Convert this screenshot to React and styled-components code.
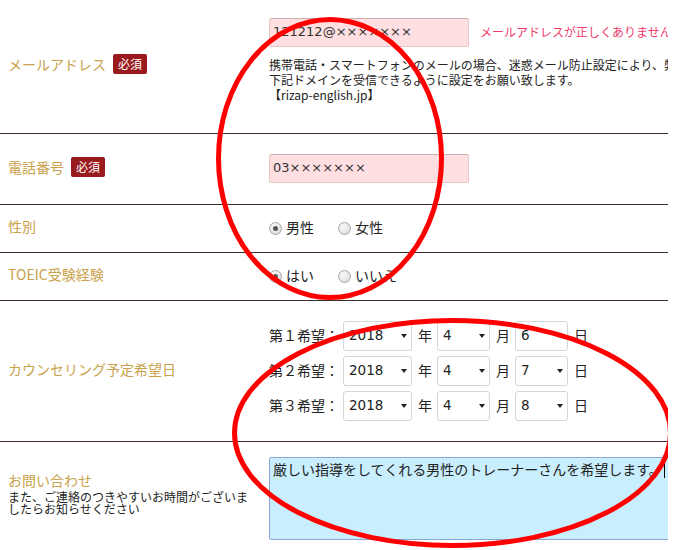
import React from 'react';
import styled, { createGlobalStyle } from 'styled-components';

const GlobalStyle = createGlobalStyle`
    html, body {
        margin: 0;
        padding: 0;
        background: #ffffff;
    }
`;

const Page = styled.div`
    position: relative;
    width: 668px;
    height: 550px;
    overflow: hidden;
    font-family: "Noto Sans CJK JP", "DejaVu Sans", sans-serif;
    color: #222222;
`;

const Row = styled.div`
    display: flex;
    border-bottom: 1px solid #3d2c26;
`;

const Label = styled.div`
    width: 269px;
    flex-shrink: 0;
    box-sizing: border-box;
    padding-left: 8px;
    padding-top: ${p => p.$top || '0'};
    padding-bottom: ${p => (p.$top ? '0' : '5px')};
    display: flex;
    flex-direction: column;
    justify-content: ${p => (p.$top ? 'flex-start' : 'center')};
`;

const LabelText = styled.div`
    display: flex;
    align-items: center;
    gap: 7px;
    font-size: 14px;
    line-height: 20px;
    color: #c9a24b;
`;

const Badge = styled.span`
    display: inline-block;
    background: #991b1e;
    color: #ffffff;
    font-size: 12px;
    line-height: 20px;
    padding: 0 5px;
    border-radius: 2px;
`;

const LabelNote = styled.div`
    margin-top: 1px;
    font-size: 12px;
    line-height: 12px;
    color: #222222;
`;

const Value = styled.div`
    flex: 1;
    min-width: 0;
    padding: ${p => p.$pad};
`;

const InputLine = styled.div`
    display: flex;
    align-items: center;
    white-space: nowrap;
`;

const TextBox = styled.div`
    width: 200px;
    height: 29px;
    box-sizing: border-box;
    flex-shrink: 0;
    background: #ffdfe1;
    border: 1px solid #e6c8c8;
    border-top-color: #cfb0b0;
    border-radius: 2px;
    padding: 0 3px;
    font-family: "DejaVu Sans", "Noto Sans CJK JP", sans-serif;
    font-size: 13px;
    line-height: 26px;
    color: #333333;
`;

const ErrorText = styled.span`
    margin-left: 11px;
    margin-top: -2px;
    font-size: 12px;
    color: #ee3a6a;
`;

const Note = styled.div`
    margin-top: 10px;
    font-size: 12px;
    line-height: 15px;
    white-space: nowrap;
`;

const RadioGroup = styled.div`
    display: flex;
    align-items: center;
    gap: 24px;
    height: 17px;
`;

const RadioItem = styled.label`
    display: flex;
    align-items: center;
    gap: 4px;
    font-size: 14px;
    line-height: 17px;
`;

const RadioDot = styled.span`
    width: 13px;
    height: 13px;
    box-sizing: border-box;
    border-radius: 50%;
    border: 1px solid #a8a8a8;
    background: radial-gradient(circle at 40% 35%, #fafafa 0%, #dcdcdc 80%);
    display: flex;
    align-items: center;
    justify-content: center;
    margin-top: 1px;

    &::after {
        content: '';
        width: 5px;
        height: 5px;
        border-radius: 50%;
        background: ${p => (p.$checked ? '#555555' : 'transparent')};
    }
`;

const DateList = styled.div`
    display: flex;
    flex-direction: column;
    gap: 5px;
`;

const DateRow = styled.div`
    display: flex;
    align-items: center;
    font-size: 14px;
    line-height: 20px;
`;

const Unit = styled.span`
    margin: 0 ${p => p.$right || '5px'} 0 ${p => p.$left || '6px'};
    padding-bottom: 3px;
`;

const SelectBox = styled.div`
    width: ${p => p.$w}px;
    height: 30px;
    box-sizing: border-box;
    border: 1px solid #d6d6d6;
    border-radius: 3px;
    background: #ffffff;
    display: flex;
    align-items: center;
    justify-content: space-between;
    padding: 0 4px 2px 5px;
    font-family: "DejaVu Sans", "Noto Sans CJK JP", sans-serif;
    font-size: 13.5px;
    color: #222222;
`;

const Arrow = styled.span`
    width: 0;
    height: 0;
    margin-top: 2px;
    border-left: 3px solid transparent;
    border-right: 3px solid transparent;
    border-top: 4px solid #222222;
`;

const TextArea = styled.div`
    width: 402px;
    height: 83px;
    box-sizing: border-box;
    background: #c9eefd;
    border: 1px solid #8ca6d8;
    border-radius: 2px;
    padding: 1px 3px;
    font-size: 14px;
    line-height: 20px;
    color: #222222;
    white-space: nowrap;
`;

const Caret = styled.span`
    display: inline-block;
    width: 1px;
    height: 18px;
    background: #000000;
    vertical-align: -3px;
    margin-left: 1px;
`;

const Marks = styled.svg`
    position: absolute;
    left: 0;
    top: 0;
    width: 675px;
    height: 550px;
    pointer-events: none;
`;

const Select = ({ w, value }) => (
    <SelectBox $w={w}>
        <span>{value}</span>
        <Arrow />
    </SelectBox>
);

const Radio = ({ checked, children }) => (
    <RadioItem>
        <RadioDot $checked={checked} />
        {children}
    </RadioItem>
);

const dates = [
    { n: '１', d: '6' },
    { n: '２', d: '7' },
    { n: '３', d: '8' },
];

const App = () => {
    return (
        <Page>
            <GlobalStyle />
            <Row>
                <Label>
                    <LabelText>メールアドレス<Badge>必須</Badge></LabelText>
                </Label>
                <Value $pad="18px 0 31px">
                    <InputLine>
                        <TextBox>121212@×××××××</TextBox>
                        <ErrorText>メールアドレスが正しくありません</ErrorText>
                    </InputLine>
                    <Note>
                        携帯電話・スマートフォンのメールの場合、迷惑メール防止設定により、弊社からのメールが届かない場合がございます。<br />
                        下記ドメインを受信できるように設定をお願い致します。<br />
                        【rizap-english.jp】
                    </Note>
                </Value>
            </Row>
            <Row>
                <Label>
                    <LabelText>電話番号<Badge>必須</Badge></LabelText>
                </Label>
                <Value $pad="20px 0 21px">
                    <TextBox>03×××××××</TextBox>
                </Value>
            </Row>
            <Row>
                <Label>
                    <LabelText>性別</LabelText>
                </Label>
                <Value $pad="14px 0 16px">
                    <RadioGroup>
                        <Radio checked>男性</Radio>
                        <Radio>女性</Radio>
                    </RadioGroup>
                </Value>
            </Row>
            <Row>
                <Label>
                    <LabelText>TOEIC受験経験</LabelText>
                </Label>
                <Value $pad="14px 0 16px">
                    <RadioGroup>
                        <Radio checked>はい</Radio>
                        <Radio>いいえ</Radio>
                    </RadioGroup>
                </Value>
            </Row>
            <Row>
                <Label>
                    <LabelText>カウンセリング予定希望日</LabelText>
                </Label>
                <Value $pad="20px 0">
                    <DateList>
                        {dates.map(r => (
                            <DateRow key={r.n}>
                                <Unit $left="0" $right="4px">第{r.n}希望：</Unit>
                                <Select w={69} value="2018" />
                                <Unit>年</Unit>
                                <Select w={53} value="4" />
                                <Unit>月</Unit>
                                <Select w={53} value={r.d} />
                                <Unit>日</Unit>
                            </DateRow>
                        ))}
                    </DateList>
                </Value>
            </Row>
            <Row>
                <Label $top="28px">
                    <LabelText>お問い合わせ</LabelText>
                    <LabelNote>
                        また、ご連絡のつきやすいお時間がございま<br />したらお知らせください
                    </LabelNote>
                </Label>
                <Value $pad="15px 0 15px">
                    <TextArea>
                        厳しい指導をしてくれる男性のトレーナーさんを希望します。<Caret />
                    </TextArea>
                </Value>
            </Row>
            <Marks viewBox="0 0 675 550">
                <ellipse cx="330" cy="158.5" rx="111.5" ry="139" fill="none" stroke="#ff0000" strokeWidth="5" />
                <ellipse cx="452.5" cy="433" rx="218" ry="112.5" fill="none" stroke="#ff0000" strokeWidth="5" />
            </Marks>
        </Page>
    );
};

export default App;
